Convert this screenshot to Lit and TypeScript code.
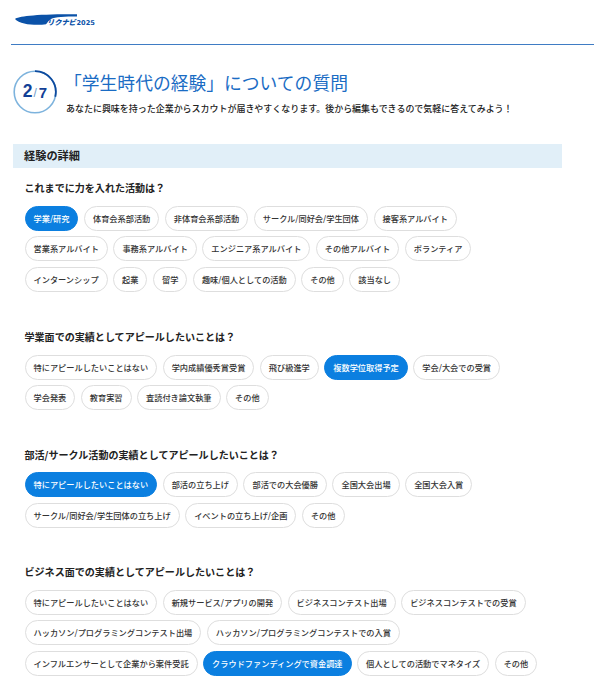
import { LitElement, html, css } from "lit";
import { customElement } from "lit/decorators.js";

type Q = { title: string; opts: string[]; on: string };

const QS: Q[] = [
  {
    title: "これまでに力を入れた活動は？",
    on: "学業/研究",
    opts: ["学業/研究", "体育会系部活動", "非体育会系部活動", "サークル/同好会/学生団体", "接客系アルバイト", "営業系アルバイト", "事務系アルバイト", "エンジニア系アルバイト", "その他アルバイト", "ボランティア", "インターンシップ", "起業", "留学", "趣味/個人としての活動", "その他", "該当なし"],
  },
  {
    title: "学業面での実績としてアピールしたいことは？",
    on: "複数学位取得予定",
    opts: ["特にアピールしたいことはない", "学内成績優秀賞受賞", "飛び級進学", "複数学位取得予定", "学会/大会での受賞", "学会発表", "教育実習", "査読付き論文執筆", "その他"],
  },
  {
    title: "部活/サークル活動の実績としてアピールしたいことは？",
    on: "特にアピールしたいことはない",
    opts: ["特にアピールしたいことはない", "部活の立ち上げ", "部活での大会優勝", "全国大会出場", "全国大会入賞", "サークル/同好会/学生団体の立ち上げ", "イベントの立ち上げ/企画", "その他"],
  },
  {
    title: "ビジネス面での実績としてアピールしたいことは？",
    on: "クラウドファンディングで資金調達",
    opts: ["特にアピールしたいことはない", "新規サービス/アプリの開発", "ビジネスコンテスト出場", "ビジネスコンテストでの受賞", "ハッカソン/プログラミングコンテスト出場", "ハッカソン/プログラミングコンテストでの入賞", "インフルエンサーとして企業から案件受託", "クラウドファンディングで資金調達", "個人としての活動でマネタイズ", "その他"],
  },
];

@customElement("app-root")
export class AppRoot extends LitElement {
  static styles = css`
    :host {
      display: block;
      width: 600px;
      height: 688px;
      overflow: hidden;
      background: #fff;
      color: #222;
      font-family: "Noto Sans CJK JP", "Noto Sans", sans-serif;
    }
    .header {
      margin: 0 6px 0 11px;
      height: 45px;
      box-sizing: border-box;
      border-bottom: 1px solid #3f7cc4;
      display: flex;
      align-items: flex-start;
      padding: 13px 0 0 4px;
    }
    .logo { position: relative; width: 85px; height: 20px; }
    .logo svg { display: block; }
    .logo-kana {
      position: absolute; left: 32px; top: 2px;
      font-size: 7.2px; line-height: 14px; font-weight: 900; font-style: italic;
      color: #0b52a8; white-space: nowrap;
    }
    .logo-year {
      position: absolute; left: 61.5px; top: 3.5px;
      font-family: "DejaVu Sans", sans-serif;
      font-size: 6.6px; line-height: 12px; font-weight: 700;
      color: #0b52a8;
    }
    .intro { display: flex; margin: 24.5px 0 0 13px; gap: 8px; height: 74.5px; }
    .ring { position: relative; width: 44px; height: 44px; flex: none; }
    .ring svg { display: block; }
    .ring-text {
      position: absolute; inset: 0; display: flex; align-items: center; justify-content: center;
      color: #123f96; font-family: "Liberation Sans", sans-serif; font-weight: 700; line-height: 1;
    }
    .ring-num { font-size: 17.5px; }
    .ring-sep { font-size: 12px; color: #6f9cc9; font-weight: 400; margin: 2px 2px 0 1px; }
    .ring-den { font-size: 15px; margin-top: 1px; }
    .intro-text { min-width: 0; }
    h1 {
      margin: 0 0 0 -1px;
      font-size: 17.8px; line-height: 24px; font-weight: 400;
      color: #1a6cc4; white-space: nowrap;
    }
    .sub { margin: 8px 0 0 1px; font-size: 8.98px; line-height: 14px; font-weight: 500; color: #222; white-space: nowrap; }
    .bar {
      margin: 0 38px 0 13px;
      height: 24px;
      padding-left: 11px;
      background: #e1eff8;
      font-size: 11.2px; line-height: 23px; font-weight: 700; color: #222;
    }
    .qs { padding: 0 0 0 24.5px; }
    .q { box-sizing: border-box; height: 117.5px; }
    .q-first { box-sizing: border-box; height: 161px; padding-top: 12px; }
    h2 { margin: 0 0 10.5px; font-size: 10.05px; line-height: 15px; font-weight: 700; color: #222; white-space: nowrap; }
    .chips { display: flex; flex-wrap: wrap; gap: 5.6px 5.5px; width: 520px; }
    .chip {
      box-sizing: border-box; height: 25px; padding: 0 8px;
      border: 1px solid #dedede; border-radius: 13px; background: #fff;
      font-size: 8.2px; line-height: 22px; font-weight: 500; color: #333; white-space: nowrap;
    }
    .chip.on { background: #0b7fe0; border-color: #0b7fe0; color: #fff; }
  `;

  render() {
    return html`
      <div class="header">
        <div class="logo">
          <svg width="62" height="14" viewBox="0 0 62 14">
            <path fill="#0b52a8" d="M0 6C3 3.5 20 1 62 1.3L62 3.5C50 3.5 40 4 36 6C33.5 7.5 32.5 9.5 31 11.3C22 12.5 5 12 0 6Z"/>
          </svg>
          <span class="logo-kana">リクナビ</span>
          <span class="logo-year">2025</span>
        </div>
      </div>
      <div class="intro">
        <div class="ring">
          <svg width="44" height="44" viewBox="0 0 44 44">
            <circle cx="22" cy="22" r="20.8" fill="none" stroke="#7db3dd" stroke-width="1.6"/>
            <path d="M22 1.2A20.8 20.8 0 0 1 42.27 26.68" fill="none" stroke="#0d4a9e" stroke-width="1.8"/>
          </svg>
          <div class="ring-text"><span class="ring-num">2</span><span class="ring-sep">/</span><span class="ring-den">7</span></div>
        </div>
        <div class="intro-text">
          <h1>「学生時代の経験」についての質問</h1>
          <p class="sub">あなたに興味を持った企業からスカウトが届きやすくなります。後から編集もできるので気軽に答えてみよう！</p>
        </div>
      </div>
      <div class="bar">経験の詳細</div>
      <div class="qs">
        ${QS.map(
          (q, i) => html`
            <section class=${i === 0 ? "q-first" : "q"}>
              <h2>${q.title}</h2>
              <div class="chips">
                ${q.opts.map((o) => html`<span class="chip ${o === q.on ? "on" : ""}">${o}</span>`)}
              </div>
            </section>
          `
        )}
      </div>
    `;
  }
}
